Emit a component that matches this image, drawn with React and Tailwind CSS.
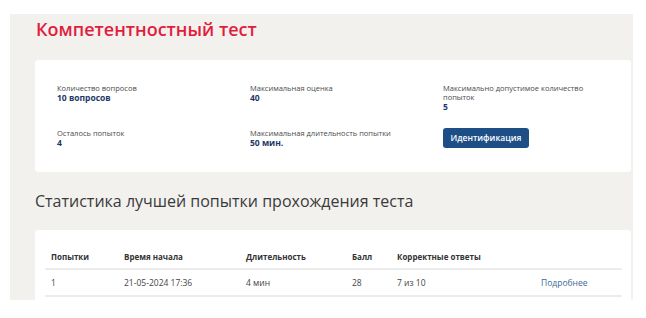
import React from 'react';

const info = [
  { label: 'Количество вопросов', value: '10 вопросов' },
  { label: 'Максимальная оценка', value: '40' },
  { label: 'Максимально допустимое количество попыток', value: '5', narrow: true },
  { label: 'Осталось попыток', value: '4' },
  { label: 'Максимальная длительность попытки', value: '50 мин.' },
];

const cols = [
  { title: 'Попытки', w: 'w-[73px]' },
  { title: 'Время начала', w: 'w-[122px]' },
  { title: 'Длительность', w: 'w-[106px]' },
  { title: 'Балл', w: 'w-[45px]' },
  { title: 'Корректные ответы', w: 'w-[144px]' },
  { title: '', w: 'flex-1' },
];

const row = ['1', '21-05-2024 17:36', '4 мин', '28', '7 из 10'];

function InfoItem({ item }) {
  return (
    <div>
      <div className={`text-[7.5px] leading-[9px] text-[#4a4a4a] ${item.narrow ? 'w-[155px]' : ''}`}>{item.label}</div>
      <div className="text-[8.5px] leading-[9px] font-bold text-[#1d3766]">{item.value}</div>
    </div>
  );
}

export default function App() {
  return (
    <div className="min-h-[318px] bg-white pt-[14px] pl-[10px]" style={{ fontFamily: '"Open Sans", sans-serif' }}>
      <div className="w-[623px] h-[286px] overflow-hidden bg-[#f2f1ee] pl-[25px] pr-[2px]">
        <h1 className="pt-[1px] text-[18px] leading-[28px] font-semibold text-[#e11d3d] pl-[1px]">Компетентностный тест</h1>

        <div className="mt-[17px] bg-white rounded-[3px] pt-[24px] pb-[23px] pl-[22px]">
          <div className="grid grid-cols-[193px_193px_1fr] grid-rows-[45px_20px]">
            <InfoItem item={info[0]} />
            <InfoItem item={info[1]} />
            <InfoItem item={info[2]} />
            <InfoItem item={info[3]} />
            <InfoItem item={info[4]} />
            <div className="flex items-start -mt-[1px]">
              <button className="block w-[86px] h-[20px] rounded-[3px] bg-[#1d4f86] text-white text-[8.5px] leading-[20px] font-semibold">
                Идентификация
              </button>
            </div>
          </div>
        </div>

        <h2 className="mt-[17px] text-[16px] leading-[24px] text-[#3a3a3a]">Статистика лучшей попытки прохождения теста</h2>

        <div className="mt-[17px] bg-white rounded-[3px] pt-[21px] pl-[10px] pr-[9px] h-[100px]">
          <div className="flex border-b-2 border-[#ececec] pb-[5px] pl-[6px] text-[8px] leading-[12px] font-bold text-[#333]">
            {cols.map((c, i) => (
              <div key={i} className={c.w}>{c.title}</div>
            ))}
          </div>
          <div className="flex border-b-2 border-[#ececec] pt-[7px] pb-[6px] pl-[6px] text-[8.5px] leading-[12px] text-[#444]">
            {row.map((v, i) => (
              <div key={i} className={cols[i].w}>{v}</div>
            ))}
            <div className="flex-1 text-[#3d6797]">Подробнее</div>
          </div>
        </div>
      </div>
    </div>
  );
}
